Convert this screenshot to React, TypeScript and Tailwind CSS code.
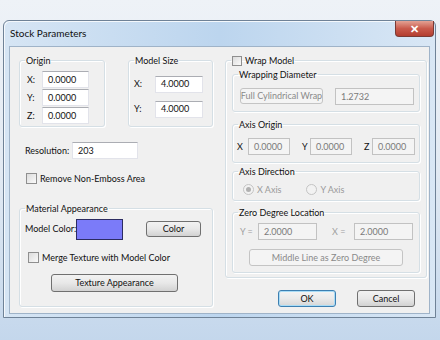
import type { ReactNode } from "react";

const font = { fontFamily: 'Lato, "Noto Sans", sans-serif' };

function Group({
  legend,
  className = "",
  children,
}: {
  legend: ReactNode;
  className?: string;
  children: ReactNode;
}) {
  return (
    <fieldset
      className={`rounded-[3px] border border-[#d5dfe5] shadow-[inset_1px_1px_0_#ffffff,1px_1px_0_#ffffff] ${className}`}
    >
      <legend className="ml-[5px] whitespace-nowrap px-[1px] text-[9px] leading-[13px] text-[#111]">
        {legend}
      </legend>
      {children}
    </fieldset>
  );
}

function TextBox({
  value,
  className = "",
  disabled = false,
}: {
  value: string;
  className?: string;
  disabled?: boolean;
}) {
  return (
    <div
      className={`flex h-[17px] items-center border pl-[5px] text-[9px] ${
        disabled
          ? "border-[#c2c2c2] bg-[#f4f4f4] text-[#7a7a7a]"
          : "border-[#e2e3ea] border-t-[#abadb3] bg-white text-[#111]"
      } ${className}`}
    >
      {value}
    </div>
  );
}

function Button({
  label,
  className = "",
  disabled = false,
  focused = false,
}: {
  label: string;
  className?: string;
  disabled?: boolean;
  focused?: boolean;
}) {
  let look = "border-[#707070] bg-gradient-to-b from-[#f2f2f2] via-[#e8e8e8] to-[#d2d2d2] text-[#111]";
  if (disabled) look = "border-[#c4c4c4] bg-[#f4f4f4] text-[#8a8a8a]";
  if (focused)
    look =
      "border-[#3c7fb1] bg-gradient-to-b from-[#f4f4f4] via-[#eaeaea] to-[#d6d6d6] text-[#111] shadow-[inset_0_0_0_1px_#a9dcf6]";
  return (
    <div
      className={`flex items-center justify-center whitespace-nowrap rounded-[3px] border text-[9px] ${look} ${className}`}
    >
      {label}
    </div>
  );
}

function CheckBox({ label }: { label: string }) {
  return (
    <div className="flex items-center gap-[3px] whitespace-nowrap text-[9px] text-[#111]">
      <span className="h-[11px] w-[11px] border border-[#8f8f8f] bg-gradient-to-br from-[#dcdcdc] to-[#fafafa]" />
      {label}
    </div>
  );
}

function Radio({ label, checked = false }: { label: string; checked?: boolean }) {
  return (
    <div className="flex items-center gap-[3px] whitespace-nowrap text-[9px] text-[#9a9a9a]">
      <span className="flex h-[11px] w-[11px] items-center justify-center rounded-full border border-[#c4c4c4] bg-[#f2f2f2]">
        {checked && <span className="h-[5px] w-[5px] rounded-full bg-[#b0b0b0]" />}
      </span>
      {label}
    </div>
  );
}

export default function App() {
  return (
    <div
      className="h-[340px] w-[440px] overflow-hidden bg-gradient-to-b from-[#eef2f7] via-[#e2eaf3] to-[#c4d7ec] pt-[20px] pl-[3px]"
      style={font}
    >
      {/* window */}
      <div className="flex h-[298px] w-[433px] flex-col rounded-t-[6px] border border-[#6f8297] bg-gradient-to-r from-[#d6e5f4] via-[#bcd5ee] to-[#d9e7f5] shadow-[inset_1px_1px_0_#f4f8fc]">
        {/* title bar */}
        <div className="flex h-[25px] items-start justify-between">
          <div className="pl-[6px] pt-[6px] text-[10px] leading-[13px] text-[#101010]">Stock Parameters</div>
          <div className="mr-[1px] flex h-[16px] w-[39px] items-center justify-center rounded-b-[4px] border border-t-0 border-[#7a3a34] bg-gradient-to-b from-[#e3a194] via-[#c95a4c] to-[#b33d2f] text-[11px] font-bold leading-none text-white">
            ✕
          </div>
        </div>

        {/* client area */}
        <div className="mx-[5px] flex h-[268px] gap-[12px] border border-[#9fb3c8] bg-[#f0f0f0] pl-[9px] pt-[7px]">
          {/* left column */}
          <div className="flex w-[194px] flex-col">
            <div className="flex gap-[23px]">
              <Group legend="Origin" className="h-[73px] w-[86px]">
                <div className="flex flex-col gap-[1px] pt-[4px]">
                  {["X:", "Y:", "Z:"].map((l) => (
                    <div key={l} className="flex h-[17px] items-center">
                      <span className="w-[22px] pl-[7px] text-[9px] text-[#111]">{l}</span>
                      <TextBox value="0.0000" className="w-[47px]" />
                    </div>
                  ))}
                </div>
              </Group>
              <Group legend="Model Size" className="h-[73px] w-[85px]">
                <div className="flex flex-col gap-[9px] pt-[9px]">
                  {["X:", "Y:"].map((l) => (
                    <div key={l} className="flex h-[16px] items-center">
                      <span className="w-[26px] pl-[5px] text-[9px] text-[#111]">{l}</span>
                      <TextBox value="4.0000" className="h-[16px] w-[48px]" />
                    </div>
                  ))}
                </div>
              </Group>
            </div>

            <div className="mt-[15px] flex items-center">
              <span className="w-[53px] whitespace-nowrap pl-[6px] text-[9px] text-[#111]">Resolution:</span>
              <TextBox value="203" className="h-[16px] w-[66px]" />
            </div>

            <div className="mt-[13px] pl-[7px]">
              <CheckBox label="Remove Non-Emboss Area" />
            </div>

            <Group legend="Material Appearance" className="mt-[16px] h-[105px] w-[194px]">
              <div className="flex items-center pt-[4px]">
                <span className="w-[56px] whitespace-nowrap pl-[5px] text-[9px] text-[#111]">Model Color:</span>
                <div className="h-[21px] w-[47px] border border-[#2c2c62] bg-[#7b7bf9]" />
                <Button label="Color" className="ml-[23px] h-[16px] w-[55px]" />
              </div>
              <div className="mt-[11px] pl-[8px]">
                <CheckBox label="Merge Texture with Model Color" />
              </div>
              <Button label="Texture Appearance" className="ml-[31px] mt-[10px] h-[18px] w-[127px]" />
            </Group>
          </div>

          {/* right column */}
          <div className="flex w-[202px] flex-col">
            <Group
              legend={
                <span className="flex items-center gap-[3px]">
                  <span className="h-[10px] w-[10px] border border-[#8f8f8f] bg-gradient-to-br from-[#dcdcdc] to-[#fafafa]" />
                  Wrap Model
                </span>
              }
              className="h-[224px] w-[202px]"
            >
              <div className="flex flex-col px-[6px]">
                <Group legend="Wrapping Diameter" className="mt-[1px] h-[44px]">
                  <div className="flex gap-[12px] pl-[7px] pt-[7px]">
                    <Button label="Full Cylindrical Wrap" disabled className="h-[16px] w-[83px]" />
                    <TextBox value="1.2732" disabled className="h-[16px] w-[79px]" />
                  </div>
                </Group>
                <Group legend="Axis Origin" className="mt-[6px] h-[45px]">
                  <div className="flex items-center pl-[4px] pt-[7px] text-[9px] text-[#111]">
                    <span className="w-[11px]">X</span>
                    <TextBox value="0.0000" disabled className="w-[42px]" />
                    <span className="ml-[12px] w-[8px]">Y</span>
                    <TextBox value="0.0000" disabled className="w-[42px]" />
                    <span className="ml-[12px] w-[8px]">Z</span>
                    <TextBox value="0.0000" disabled className="w-[43px]" />
                  </div>
                </Group>
                <Group legend="Axis Direction" className="mt-[2px] h-[36px]">
                  <div className="flex items-center gap-[25px] pl-[10px] pt-[5px]">
                    <Radio label="X Axis" checked />
                    <Radio label="Y Axis" />
                  </div>
                </Group>
                <Group legend="Zero Degree Location" className="mt-[5px] h-[67px]">
                  <div className="flex items-center pl-[7px] pt-[4px] text-[9px] text-[#a0a0a0]">
                    <span className="w-[18px] whitespace-nowrap">Y =</span>
                    <TextBox value="2.0000" disabled className="h-[16px] w-[59px]" />
                    <span className="ml-[15px] w-[22px] whitespace-nowrap">X =</span>
                    <TextBox value="2.0000" disabled className="h-[16px] w-[59px]" />
                  </div>
                  <Button
                    label="Middle Line as Zero Degree"
                    disabled
                    className="ml-[16px] mt-[9px] h-[17px] w-[154px]"
                  />
                </Group>
              </div>
            </Group>

            <div className="mt-[12px] flex gap-[21px] pl-[53px]">
              <Button label="OK" focused className="h-[17px] w-[58px]" />
              <Button label="Cancel" className="h-[17px] w-[58px]" />
            </div>
          </div>
        </div>
      </div>
    </div>
  );
}
